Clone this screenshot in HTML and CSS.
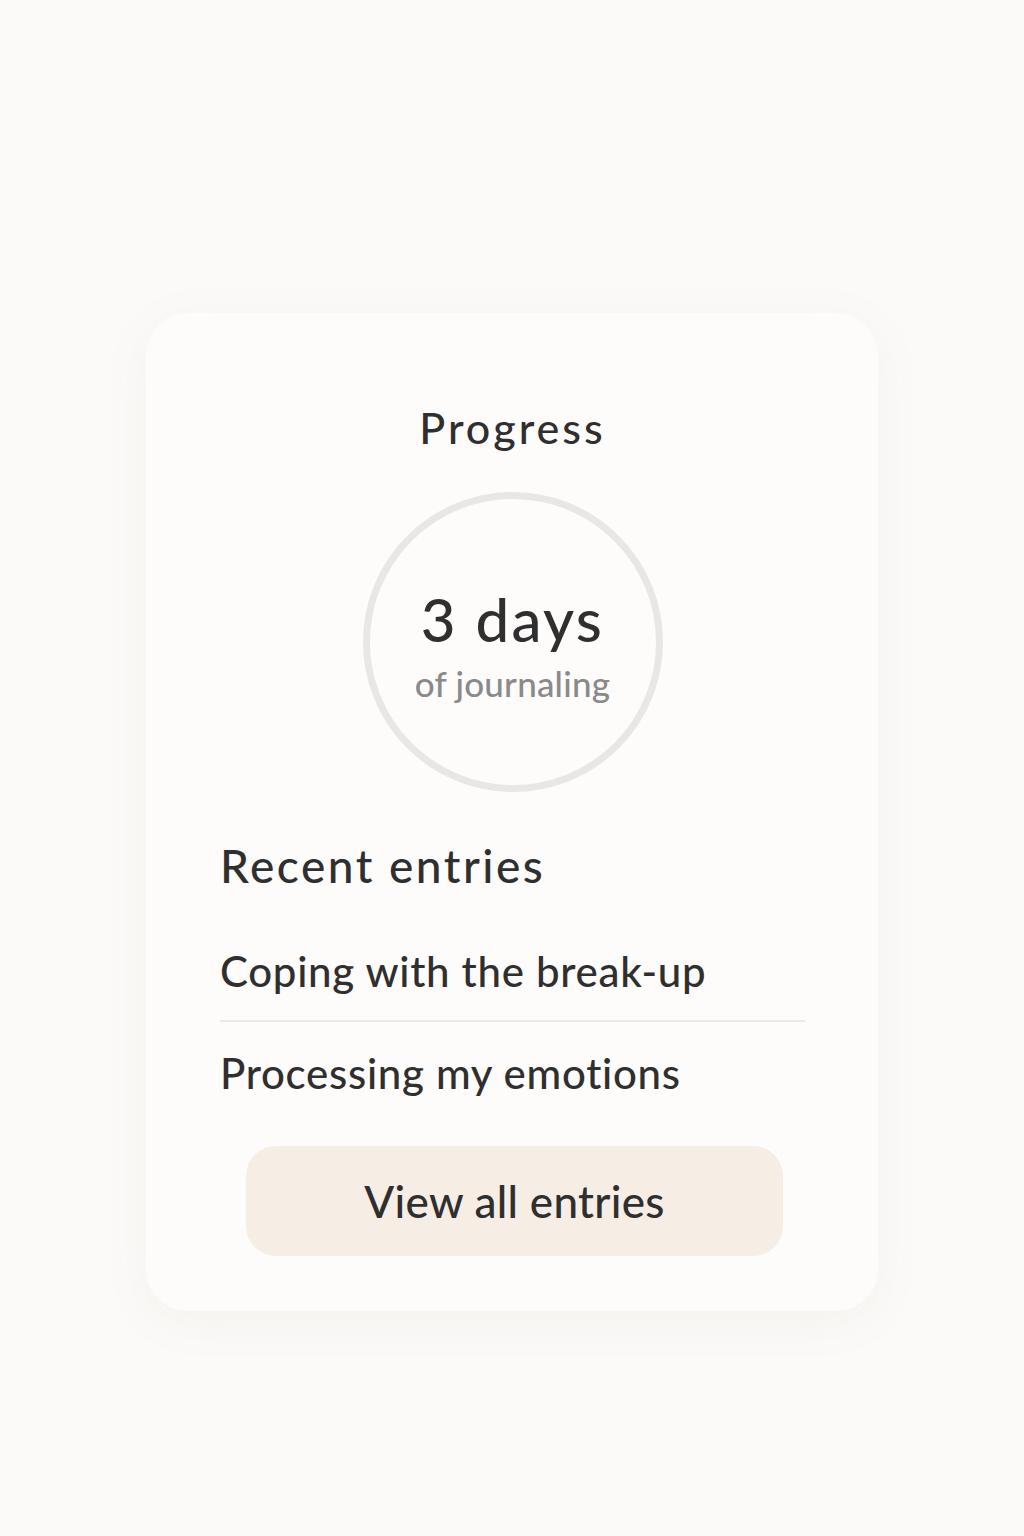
FILE: index.html
```html
<!DOCTYPE html>
<html lang="en">
<head>
    <meta charset="UTF-8">
    <meta name="viewport" content="width=device-width, initial-scale=1.0">
    <title>Progress</title>
    <link rel="stylesheet" href="styles.css">
</head>
<body>
    <!-- Journaling progress card -->
    <div class="card">
        <h2 class="card-title">Progress</h2>

        <div class="streak-ring">
            <span class="streak-count">3 days</span>
            <span class="streak-label">of journaling</span>
        </div>

        <h3 class="section-title">Recent entries</h3>

        <ul class="entry-list">
            <li class="entry">Coping with the break-up</li>
            <li class="entry">Processing my emotions</li>
        </ul>

        <button class="view-all">View all entries</button>
    </div>
</body>
</html>
```

FILE: styles.css
```css
/* General page style */
body {
    font-family: Lato, "Open Sans", sans-serif;
    font-weight: 500;
    background-color: #fcfaf8;
    color: #2f2f2f;
    margin: 0;
    padding: 313px 0 0;
    min-height: 1536px;
    box-sizing: border-box;
    display: flex;
    flex-direction: column;
    align-items: center;
}

.card {
    width: 732px;
    box-sizing: border-box;
    padding: 90px 73px 55px 74px;
    background-color: #fefcfb;
    border-radius: 42px;
    box-shadow: 0 10px 50px rgba(120, 100, 80, 0.06);
    display: flex;
    flex-direction: column;
}

.card-title {
    margin: 0;
    font-size: 43px;
    font-weight: 500;
    letter-spacing: 3px;
    line-height: 50px;
    text-align: center;
}

/* Circle with the streak */
.streak-ring {
    width: 300px;
    height: 300px;
    margin: 39px auto 0;
    box-sizing: border-box;
    border: 7px solid #e9e6e3;
    border-radius: 50%;
    display: flex;
    flex-direction: column;
    align-items: center;
    justify-content: center;
}

.streak-count {
    font-size: 60px;
    letter-spacing: 2.3px;
    line-height: 66px;
    margin-top: 6px;
}

.streak-label {
    font-size: 35px;
    letter-spacing: 0.2px;
    line-height: 42px;
    margin-top: 10px;
    color: #8a8a8a;
}

.section-title {
    margin: 46px 0 26px;
    font-size: 46px;
    font-weight: 500;
    letter-spacing: 2.5px;
    line-height: 56px;
}

.entry-list {
    list-style: none;
    margin: 0;
    padding: 0;
}

.entry {
    font-size: 42px;
    letter-spacing: 0.7px;
    line-height: 50px;
    padding: 26px 0 24px;
}

.entry:first-child {
    border-bottom: 2px solid #ebe8e5;
}

.view-all {
    margin: 24px 22px 0 26px;
    height: 110px;
    border: none;
    border-radius: 30px;
    background-color: #f6eee5;
    color: #2f2f2f;
    font-family: inherit;
    font-weight: 500;
    font-size: 44px;
    letter-spacing: 0.3px;
    cursor: pointer;
}
```
